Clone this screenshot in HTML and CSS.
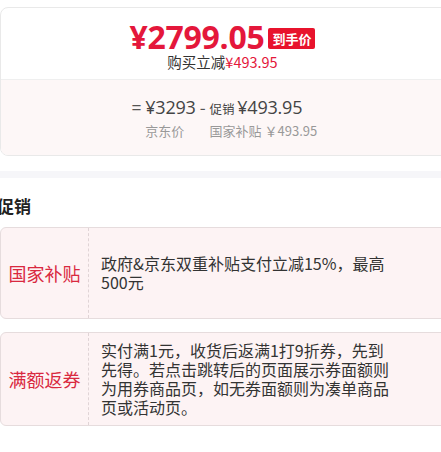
FILE: index.html
```html
<!DOCTYPE html>
<html lang="zh-CN">
<head>
    <meta charset="UTF-8">
    <meta name="viewport" content="width=device-width, initial-scale=1.0">
    <title>到手价</title>
    <link rel="stylesheet" href="styles.css">
</head>
<body>
    <div class="price-card">
        <div class="price-top">
            <div class="final-row">
                <span class="final-price">¥2799.05</span>
                <span class="final-tag">到手价</span>
            </div>
            <div class="saving">购买立减<span class="red">¥493.95</span></div>
        </div>
        <div class="price-calc">
            <div class="calc-grid">
                <span class="op">=</span>
                <span class="num">¥3293</span>
                <span class="op minus">-</span>
                <span class="num"><small>促销</small>¥493.95</span>
                <span></span>
                <span class="cap">京东价</span>
                <span></span>
                <span class="cap">国家补贴 ￥493.95</span>
            </div>
        </div>
    </div>

    <div class="divider"></div>

    <h2 class="section-title">促销</h2>

    <div class="promo">
        <div class="promo-label">国家补贴</div>
        <div class="promo-text">政府&amp;京东双重补贴支付立减15%，最高500元</div>
    </div>

    <div class="promo">
        <div class="promo-label">满额返券</div>
        <div class="promo-text">实付满1元，收货后返满1打9折券，先到先得。若点击跳转后的页面展示券面额则为用券商品页，如无券面额则为凑单商品页或活动页。</div>
    </div>
</body>
</html>
```

FILE: styles.css
```css
body {
    margin: 0;
    padding-top: 7px;
    background-color: #fff;
    font-family: "Noto Sans CJK SC", "Noto Sans", sans-serif;
    color: #333;
    overflow: hidden;
}

.price-card {
    margin-right: -12px;
    border: 1px solid #e9e9e9;
    border-radius: 8px;
    overflow: hidden;
}

.price-top {
    height: 72px;
    display: flex;
    flex-direction: column;
    align-items: center;
    border-bottom: 1px solid #efefef;
    padding-right: 8px;
    box-sizing: border-box;
}

.final-row {
    display: flex;
    align-items: center;
    gap: 4px;
    margin-top: 8px;
    height: 42px;
}

.final-price {
    font-family: "Open Sans", sans-serif;
    font-weight: 700;
    font-size: 32px;
    line-height: 42px;
    color: #e4173b;
    letter-spacing: -0.3px;
}

.final-tag {
    background-color: #e8132c;
    color: #fff;
    font-weight: bold;
    font-size: 13px;
    line-height: 21px;
    padding: 0 4px;
    border-radius: 2px;
    margin-top: 2px;
}

.saving {
    font-size: 14.5px;
    line-height: 18px;
    margin-top: -5px;
}

.red {
    color: #e4173b;
}

.price-calc {
    background-color: #fdf7f7;
    height: 75px;
    display: flex;
    justify-content: center;
    padding-right: 4px;
}

.calc-grid {
    display: grid;
    grid-template-columns: auto auto auto auto;
    grid-template-rows: 20px 20px;
    column-gap: 4px;
    row-gap: 4px;
    align-items: center;
    margin-top: 17px;
}

.op {
    font-size: 17px;
    line-height: 20px;
    color: #555;
}

.num {
    font-family: "Open Sans", sans-serif;
    font-size: 18px;
    line-height: 20px;
    letter-spacing: -0.2px;
    color: #444;
}

.num small {
    font-family: "Noto Sans CJK SC", sans-serif;
    font-size: 12.5px;
    line-height: 1;
    margin-right: 3px;
}

.cap {
    font-size: 13px;
    color: #999;
    line-height: 20px;
}

.divider {
    height: 7px;
    margin-top: 15px;
    background-color: #f6f6f9;
}

.section-title {
    margin: 17px 0 0 -3px;
    font-size: 17px;
    line-height: 22px;
    font-weight: bold;
    color: #222;
}

.promo {
    display: flex;
    margin-top: 10px;
    margin-right: -12px;
    min-height: 90px;
    background-color: #fdf3f4;
    border: 1px solid #e6dcdd;
    border-radius: 6px;
}

.promo + .promo {
    margin-top: 13px;
}

.promo-label {
    width: 87px;
    flex-shrink: 0;
    display: flex;
    align-items: center;
    justify-content: center;
    border-right: 1px dashed #e0d4d6;
    font-size: 18px;
    color: #d9283f;
}

.promo-text {
    width: 296px;
    padding: 8px 0 8px 12px;
    align-self: center;
    font-size: 16px;
    line-height: 19px;
    color: #333;
}
```
